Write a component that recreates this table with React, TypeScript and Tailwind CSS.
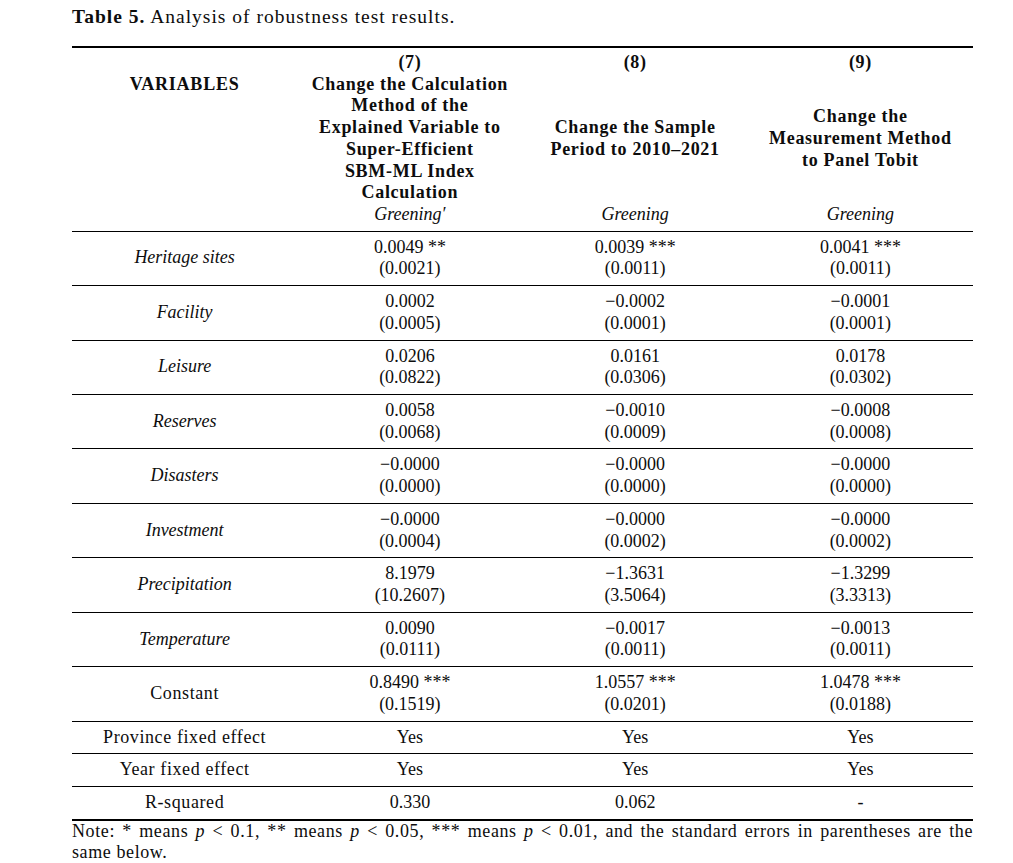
import React from 'react';

type Row = { name: string; italic?: boolean; cells: [string, string][] };

const rows: Row[] = [
  { name: 'Heritage sites', italic: true, cells: [['0.0049 **', '(0.0021)'], ['0.0039 ***', '(0.0011)'], ['0.0041 ***', '(0.0011)']] },
  { name: 'Facility', italic: true, cells: [['0.0002', '(0.0005)'], ['\u22120.0002', '(0.0001)'], ['\u22120.0001', '(0.0001)']] },
  { name: 'Leisure', italic: true, cells: [['0.0206', '(0.0822)'], ['0.0161', '(0.0306)'], ['0.0178', '(0.0302)']] },
  { name: 'Reserves', italic: true, cells: [['0.0058', '(0.0068)'], ['\u22120.0010', '(0.0009)'], ['\u22120.0008', '(0.0008)']] },
  { name: 'Disasters', italic: true, cells: [['\u22120.0000', '(0.0000)'], ['\u22120.0000', '(0.0000)'], ['\u22120.0000', '(0.0000)']] },
  { name: 'Investment', italic: true, cells: [['\u22120.0000', '(0.0004)'], ['\u22120.0000', '(0.0002)'], ['\u22120.0000', '(0.0002)']] },
  { name: 'Precipitation', italic: true, cells: [['8.1979', '(10.2607)'], ['\u22121.3631', '(3.5064)'], ['\u22121.3299', '(3.3313)']] },
  { name: 'Temperature', italic: true, cells: [['0.0090', '(0.0111)'], ['\u22120.0017', '(0.0011)'], ['\u22120.0013', '(0.0011)']] },
  { name: 'Constant', cells: [['0.8490 ***', '(0.1519)'], ['1.0557 ***', '(0.0201)'], ['1.0478 ***', '(0.0188)']] },
];

const summary: [string, string, string, string][] = [
  ['Province fixed effect', 'Yes', 'Yes', 'Yes'],
  ['Year fixed effect', 'Yes', 'Yes', 'Yes'],
  ['R-squared', '0.330', '0.062', '-'],
];

function HeaderCol({ num, lines, dep }: { num: string; lines: string[]; dep: string }) {
  return (
    <div className="flex flex-col items-center text-center">
      <div className="font-bold">{num}</div>
      <div className="flex-1 flex flex-col justify-center font-bold tracking-[0.7px]">
        {lines.map((l) => (
          <div key={l}>{l}</div>
        ))}
      </div>
      <div className="italic tracking-normal">{dep}</div>
    </div>
  );
}

export default function App() {
  return (
    <div className="w-[1013px] h-[863px] bg-white text-[#0d0d0d] font-['Liberation_Serif',serif] text-[18px] leading-[21.7px] tracking-[0.6px]">
      <div className="pl-[72px] pr-[40px]">
        {/* Caption */}
        <p className="pt-[6px] text-[19.5px] leading-[22px] tracking-[1px]">
          <span className="font-bold">Table 5.</span> Analysis of robustness test results.
        </p>

        {/* Table */}
        <div className="mt-[18px] border-t-2 border-b-2 border-black">
          <div className="grid grid-cols-4 pt-[4px] pb-[5px]">
            <div className="text-center font-bold pt-[21.7px] tracking-[0.8px]">VARIABLES</div>
            <HeaderCol
              num="(7)"
              lines={['Change the Calculation', 'Method of the', 'Explained Variable to', 'Super-Efficient', 'SBM-ML Index', 'Calculation']}
              dep={'Greening\u2032'}
            />
            <HeaderCol num="(8)" lines={['Change the Sample', 'Period to 2010\u20132021']} dep="Greening" />
            <HeaderCol num="(9)" lines={['Change the', 'Measurement Method', 'to Panel Tobit']} dep="Greening" />
          </div>

          {rows.map((r) => (
            <div key={r.name} className="grid grid-cols-4 h-[54.45px] border-t border-black items-center text-center">
              <div className={r.italic ? 'italic tracking-normal' : ''}>{r.name}</div>
              {r.cells.map(([v, se], i) => (
                <div key={i} className="tracking-normal">
                  <div>{v}</div>
                  <div>{se}</div>
                </div>
              ))}
            </div>
          ))}

          {summary.map((s) => (
            <div key={s[0]} className="grid grid-cols-4 h-[32.8px] border-t border-black items-center text-center">
              {s.map((c, i) => (
                <div key={i} className={i === 0 ? '' : 'tracking-normal'}>
                  {c}
                </div>
              ))}
            </div>
          ))}
        </div>

        {/* Note */}
        <div className="leading-[21px]">
          <p className="text-justify [text-align-last:justify]">
            Note: * means <span className="italic">p</span> &lt; 0.1, ** means <span className="italic">p</span> &lt; 0.05, *** means{' '}
            <span className="italic">p</span> &lt; 0.01, and the standard errors in parentheses are the
          </p>
          <p>same below.</p>
        </div>
      </div>
    </div>
  );
}
